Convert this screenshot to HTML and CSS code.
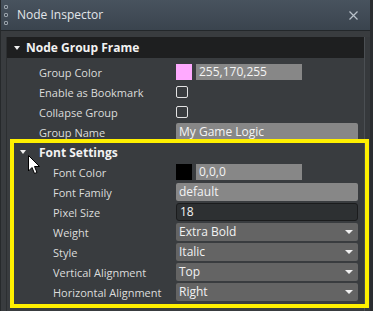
FILE: index.html
```html
<!DOCTYPE html>
<html lang="en">
<head>
  <meta charset="UTF-8">
  <title>Node Inspector</title>
  <link rel="stylesheet" href="styles.css">
</head>
<body>
  <div class="window">
    <div class="titlebar">
      <div class="grip"><i></i><i></i><i></i></div>
      <span class="title">Node Inspector</span>
      <svg class="close" width="9" height="9" viewBox="0 0 9 9">
        <path d="M0.5 0.5 L8.5 8.5 M8.5 0.5 L0.5 8.5" stroke="#b9c1c9" stroke-width="1.2"/>
      </svg>
    </div>

    <div class="body">
      <div class="content">
        <div class="section-head">
          <span class="tri"></span>
          <span>Node Group Frame</span>
        </div>

        <div class="row">
          <label>Group Color</label>
          <div class="val">
            <span class="swatch pink"></span>
            <span class="field short">255,170,255</span>
          </div>
        </div>
        <div class="row">
          <label>Enable as Bookmark</label>
          <div class="val"><span class="check"></span></div>
        </div>
        <div class="row">
          <label>Collapse Group</label>
          <div class="val"><span class="check"></span></div>
        </div>
        <div class="row">
          <label>Group Name</label>
          <div class="val"><span class="field">My Game Logic</span></div>
        </div>

        <div class="row sub-head">
          <span class="tri"></span>
          <span>Font Settings</span>
        </div>

        <div class="row deep">
          <label>Font Color</label>
          <div class="val">
            <span class="swatch black"></span>
            <span class="field short">0,0,0</span>
          </div>
        </div>
        <div class="row deep">
          <label>Font Family</label>
          <div class="val"><span class="field">default</span></div>
        </div>
        <div class="row deep">
          <label>Pixel Size</label>
          <div class="val"><span class="field dark">18</span></div>
        </div>
        <div class="row deep">
          <label>Weight</label>
          <div class="val"><span class="drop">Extra Bold</span></div>
        </div>
        <div class="row deep">
          <label>Style</label>
          <div class="val"><span class="drop">Italic</span></div>
        </div>
        <div class="row deep">
          <label>Vertical Alignment</label>
          <div class="val"><span class="drop">Top</span></div>
        </div>
        <div class="row deep">
          <label>Horizontal Alignment</label>
          <div class="val"><span class="drop">Right</span></div>
        </div>
      </div>
      <div class="scroll"></div>
    </div>

    <!-- annotation on top of the screenshot -->
    <div class="highlight"></div>
    <svg class="cursor" width="13" height="20" viewBox="0 0 13 20">
      <path d="M0.5 0.5 L0.5 16 L4 12.5 L6.5 18.5 L9 17.5 L6.5 11.5 L11.5 11.5 Z" fill="#fff" stroke="#000" stroke-width="1"/>
    </svg>
  </div>
</body>
</html>
```

FILE: styles.css
```css
body {
  margin: 0;
  background: #2a2d30;
  font-family: "Open Sans", "Liberation Sans", sans-serif;
  font-size: 11px;
  color: #dcdcdc;
}

.window {
  position: relative;
  width: 373px;
  height: 311px;
  overflow: hidden;
  background: #393c3f;
  border-left: 1px solid #26292b;
  border-right: 3px solid #2a2d30;
  box-sizing: border-box;
}

.titlebar {
  height: 31px;
  display: flex;
  align-items: center;
  background: linear-gradient(#48535e, #3a444e);
  border-bottom: 1px solid #23272a;
  box-sizing: border-box;
}

.grip {
  display: flex;
  flex-direction: column;
  gap: 4px;
  margin-left: 3px;
  width: 13px;
}

.grip i {
  width: 2px;
  height: 2px;
  border: 1px solid #9aa3ab;
  border-radius: 1px;
}

.title {
  font-size: 12px;
  color: #e2e6ea;
  margin-top: -1px;
}

.close {
  margin-left: auto;
  margin-right: 12px;
}

.body {
  display: flex;
  height: 280px;
  padding-top: 6px;
  box-sizing: border-box;
}

.content {
  width: 357px;
  margin-left: 5px;
  border-left: 1px solid #2c2f31;
  border-right: 1px solid #4b4f53;
}

.scroll {
  flex: 1;
  background: #36393c;
}

.section-head {
  height: 21px;
  display: flex;
  align-items: center;
  background: #1e1f20;
  font-size: 12px;
  font-weight: bold;
  color: #f2f2f2;
  margin-bottom: 4px;
}

.section-head .tri {
  margin-left: 7px;
  margin-right: 6px;
}

.tri {
  width: 0;
  height: 0;
  border-left: 3.5px solid transparent;
  border-right: 3.5px solid transparent;
  border-top: 4px solid #f0f0f0;
}

.row {
  height: 20px;
  display: flex;
  align-items: center;
}

.row label {
  width: 169px;
  padding-left: 32px;
  box-sizing: border-box;
  white-space: nowrap;
}

.row.deep label {
  padding-left: 46px;
}

.sub-head {
  font-size: 12px;
  font-weight: bold;
  color: #f2f2f2;
}

.sub-head .tri {
  margin-left: 13px;
  margin-right: 13px;
}

.val {
  width: 182px;
  display: flex;
  align-items: center;
  gap: 4px;
}

.swatch {
  width: 16px;
  height: 16px;
}

.pink {
  background: #ffaaff;
}

.black {
  background: #000;
}

.field {
  flex: 1;
  height: 18px;
  line-height: 18px;
  padding-left: 3px;
  background: #878787;
  color: #f4f4f4;
  font-size: 12px;
  border-radius: 2px;
}

.field.short {
  flex: none;
  width: 103px;
  height: 16px;
  line-height: 16px;
  border-radius: 0;
}

.field.dark {
  height: 16px;
  line-height: 16px;
  background: #2d3032;
  border: 1px solid #1b1c1d;
  border-radius: 3px;
}

.check {
  width: 10px;
  height: 10px;
  border: 1px solid #e2e2e2;
  border-radius: 2px;
}

.drop {
  flex: 1;
  height: 18px;
  line-height: 18px;
  padding-left: 3px;
  background: #646464;
  color: #f2f2f2;
  font-size: 12px;
  border-radius: 2px;
  display: flex;
  align-items: center;
  justify-content: space-between;
}

.drop::after {
  content: "";
  margin-right: 5px;
  border-left: 4px solid transparent;
  border-right: 4px solid transparent;
  border-top: 4px solid #f0f0f0;
}

.highlight {
  position: absolute;
  left: 9px;
  top: 139px;
  width: 359px;
  height: 169px;
  border: 4px solid #fff000;
  box-sizing: border-box;
}

.cursor {
  position: absolute;
  left: 27px;
  top: 155px;
}
```
